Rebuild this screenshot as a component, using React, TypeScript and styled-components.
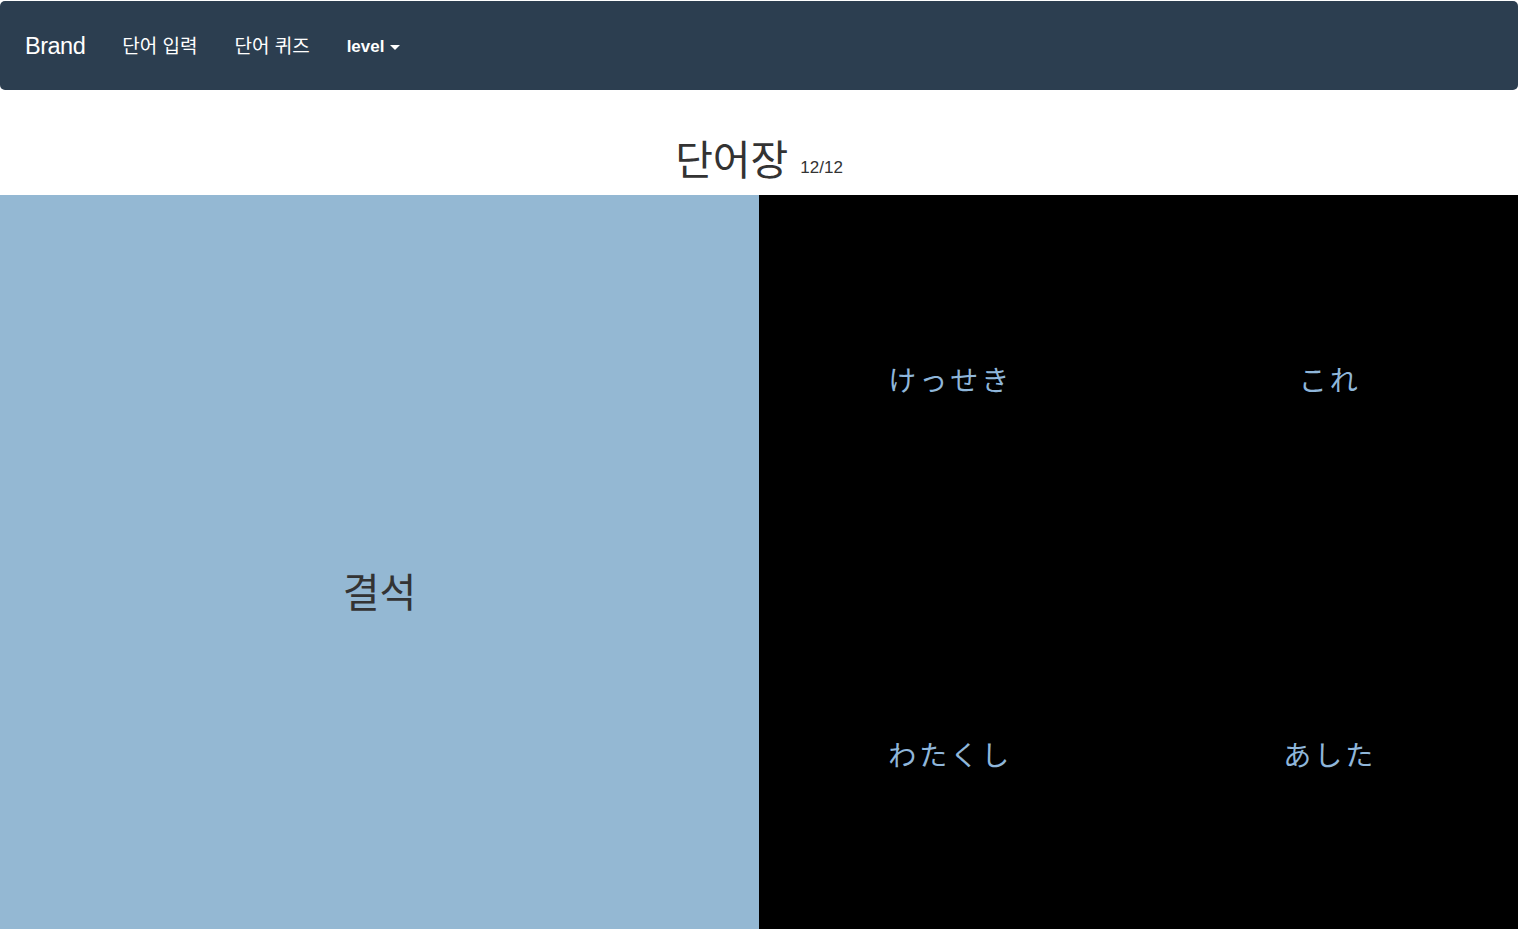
import React from "react";
import styled, { createGlobalStyle } from "styled-components";

const Global = createGlobalStyle`
  html, body { margin: 0; padding: 0; background: #fff; overflow: hidden; }
  body { font-family: "Liberation Sans", "Noto Sans CJK KR", Arial, sans-serif; color: #333; }
  * { box-sizing: border-box; }
`;

const Page = styled.div`
  width: 1518px;
`;

const Navbar = styled.nav`
  margin-top: 1px;
  height: 89px;
  background: #2c3e50;
  border-radius: 5px;
  display: flex;
  align-items: center;
  padding: 0 25px;
`;

const Brand = styled.a`
  font-family: "Liberation Sans", Arial, sans-serif;
  font-size: 23.5px;
  color: #fff;
  letter-spacing: -0.5px;
  margin-right: 37px;
  margin-top: 1px;
`;

const NavLink = styled.a<{ $bold?: boolean }>`
  font-family: "Liberation Sans", "Noto Sans CJK KR", sans-serif;
  font-size: ${(p) => (p.$bold ? "17px" : "19px")};
  font-weight: ${(p) => (p.$bold ? 700 : 400)};
  color: #fff;
  margin-right: 37px;
  display: flex;
  align-items: center;
  gap: 6px;
  margin-top: ${(p) => (p.$bold ? "2px" : "-3px")};
`;

const Caret = styled.span`
  width: 0;
  height: 0;
  border-left: 5px solid transparent;
  border-right: 5px solid transparent;
  border-top: 5px solid #fff;
  margin-top: 2px;
`;

const TitleRow = styled.div`
  height: 105px;
  display: flex;
  justify-content: center;
  align-items: flex-end;
  padding-bottom: 17px;
`;

const Title = styled.h1`
  margin: 0;
  font-family: "Noto Sans CJK KR", sans-serif;
  font-weight: 400;
  font-size: 41px;
  line-height: 1;
  color: #333;
`;

const Count = styled.small`
  font-family: "Liberation Sans", sans-serif;
  font-size: 17px;
  color: #333;
  margin-left: 12px;
  margin-bottom: 0;
`;

const Board = styled.div`
  display: grid;
  grid-template-columns: 759px 759px;
  height: 794px;
`;

const Question = styled.div`
  background: #94b8d3;
  display: flex;
  align-items: center;
  justify-content: center;
  font-family: "Noto Sans CJK KR", sans-serif;
  font-size: 40px;
  color: #333;
  padding-bottom: 4px;
`;

const Choices = styled.div`
  background: #000;
  display: grid;
  grid-template-columns: 1fr 1fr;
  grid-template-rows: 375px 375px;
  align-content: start;
`;

const Choice = styled.div`
  display: flex;
  align-items: center;
  justify-content: center;
  font-family: "Noto Sans CJK JP", sans-serif;
  font-size: 28px;
  letter-spacing: 3px;
  color: #8fb6da;
  padding-left: 3px;
  padding-bottom: 8px;
`;

export default function App() {
  const choices = ["けっせき", "これ", "わたくし", "あした"];
  return (
    <Page>
      <Global />
      <Navbar>
        <Brand>Brand</Brand>
        <NavLink>단어 입력</NavLink>
        <NavLink>단어 퀴즈</NavLink>
        <NavLink $bold>
          level <Caret />
        </NavLink>
      </Navbar>
      <TitleRow>
        <Title>단어장</Title>
        <Count>12/12</Count>
      </TitleRow>
      <Board>
        <Question>결석</Question>
        <Choices>
          {choices.map((c) => (
            <Choice key={c}>{c}</Choice>
          ))}
        </Choices>
      </Board>
    </Page>
  );
}
